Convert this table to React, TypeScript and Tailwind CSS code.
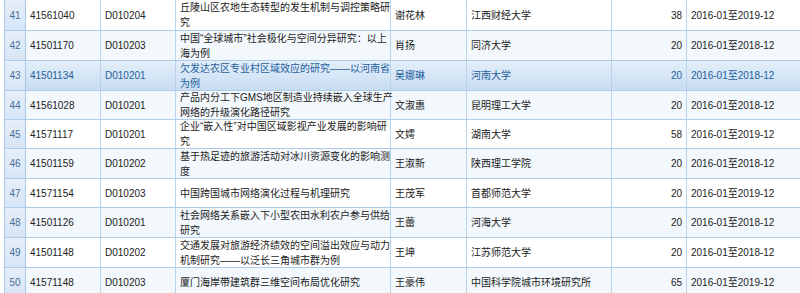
import React from 'react';

type Row = {
  no: number;
  code: string;
  subject: string;
  title: string[];
  leader: string;
  org: string;
  fund: number;
  period: string;
  h: string;
};

const rows: Row[] = [
  { no: 41, code: '41561040', subject: 'D010204', title: ['丘陵山区农地生态转型的发生机制与调控策略研', '究'], leader: '谢花林', org: '江西财经大学', fund: 38, period: '2016-01至2019-12', h: 'h-[31px]' },
  { no: 42, code: '41501170', subject: 'D010203', title: ['中国“全球城市”社会极化与空间分异研究：以上', '海为例'], leader: '肖扬', org: '同济大学', fund: 20, period: '2016-01至2018-12', h: 'h-[30px]' },
  { no: 43, code: '41501134', subject: 'D010201', title: ['欠发达农区专业村区域效应的研究——以河南省', '为例'], leader: '吴娜琳', org: '河南大学', fund: 20, period: '2016-01至2018-12', h: 'h-[30px]' },
  { no: 44, code: '41561028', subject: 'D010201', title: ['产品内分工下GMS地区制造业持续嵌入全球生产', '网络的升级演化路径研究'], leader: '文淑惠', org: '昆明理工大学', fund: 20, period: '2016-01至2018-12', h: 'h-[29px]' },
  { no: 45, code: '41571117', subject: 'D010201', title: ['企业“嵌入性”对中国区域影视产业发展的影响研', '究'], leader: '文嫮', org: '湖南大学', fund: 58, period: '2016-01至2019-12', h: 'h-[29px]' },
  { no: 46, code: '41501159', subject: 'D010202', title: ['基于热足迹的旅游活动对冰川资源变化的影响测', '度'], leader: '王淑新', org: '陕西理工学院', fund: 20, period: '2016-01至2018-12', h: 'h-[30px]' },
  { no: 47, code: '41571154', subject: 'D010203', title: ['中国跨国城市网络演化过程与机理研究'], leader: '王茂军', org: '首都师范大学', fund: 20, period: '2016-01至2019-12', h: 'h-[29px]' },
  { no: 48, code: '41501126', subject: 'D010201', title: ['社会网络关系嵌入下小型农田水利农户参与供给', '研究'], leader: '王蕾', org: '河海大学', fund: 20, period: '2016-01至2018-12', h: 'h-[30px]' },
  { no: 49, code: '41501148', subject: 'D010202', title: ['交通发展对旅游经济绩效的空间溢出效应与动力', '机制研究——以泛长三角城市群为例'], leader: '王坤', org: '江苏师范大学', fund: 20, period: '2016-01至2018-12', h: 'h-[30px]' },
  { no: 50, code: '41571148', subject: 'D010203', title: ['厦门海岸带建筑群三维空间布局优化研究'], leader: '王豪伟', org: '中国科学院城市环境研究所', fund: 65, period: '2016-01至2019-12', h: 'h-[30px]' },
];

// row under the mouse in the screenshot
const HOVER = 43;

const GridRow = ({ r }: { r: Row }) => {
  const hover = r.no === HOVER;
  const alt = r.no % 2 === 0;
  const bg = hover
    ? 'bg-gradient-to-b from-[#e3eef9] via-[#d6e6f6] to-[#c8dcf1] text-[#24609d]'
    : alt
      ? 'bg-[#f3f8fd] text-[#222]'
      : 'bg-white text-[#222]';
  const cell = 'flex items-center border-r border-[#b9d3ec] px-1 shrink-0';

  return (
    <div className={`flex border-b border-[#aecbe8] ${r.h} ${bg}`}>
      <div className="flex w-[21px] shrink-0 items-center justify-center border-r border-[#a9c7e6] bg-gradient-to-b from-[#e6effa] to-[#d6e5f6] text-[#4a6d95]">
        {r.no}
      </div>
      <div className={`${cell} w-[75px]`}>{r.code}</div>
      <div className={`${cell} w-[75px]`}>{r.subject}</div>
      <div className={`${cell} w-[215px]`}>
        <div className="leading-[15px] whitespace-nowrap">
          {r.title.map((t, i) => (
            <div key={i}>{t}</div>
          ))}
        </div>
      </div>
      <div className={`${cell} w-[76px]`}>{r.leader}</div>
      <div className={`${cell} w-[145px] whitespace-nowrap`}>{r.org}</div>
      <div className={`${cell} w-[75px] justify-end`}>{r.fund}</div>
      <div className="flex w-[140px] shrink-0 items-center px-1 whitespace-nowrap">{r.period}</div>
    </div>
  );
};

export default function App() {
  return (
    <div className="h-[293px] w-[800px] overflow-hidden bg-white pl-[4px] font-['Liberation_Sans','Noto_Sans_CJK_SC',sans-serif] text-[10px]">
      <div className="w-[830px] border-l border-[#a9c7e6]">
        {rows.map((r) => (
          <GridRow key={r.no} r={r} />
        ))}
      </div>
    </div>
  );
}
